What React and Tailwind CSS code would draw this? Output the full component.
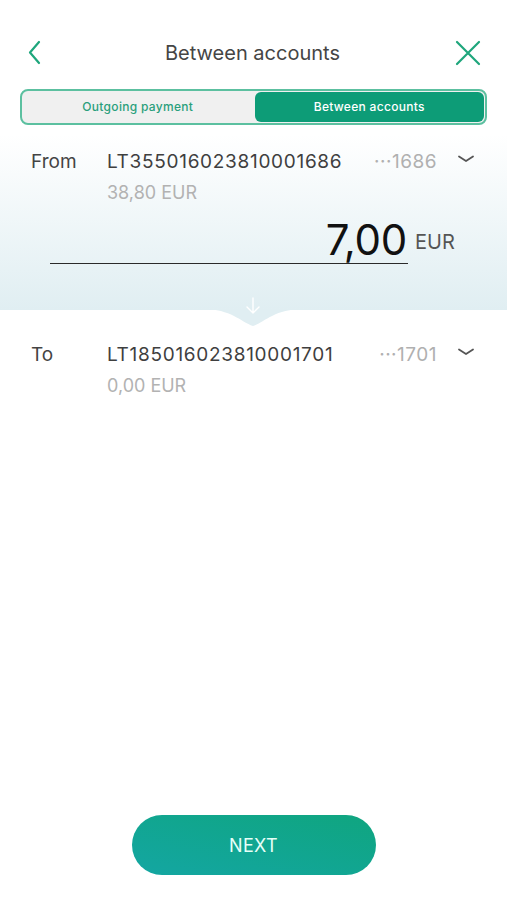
import React from "react";

const font = { fontFamily: "Inter, 'Open Sans', sans-serif" };

function Chevron() {
  return (
    <svg width="18" height="10" viewBox="0 0 18 10" fill="none">
      <path d="M2 2.5 L9 7 L16 2.5" stroke="#555" strokeWidth="1.8" strokeLinecap="round" strokeLinejoin="round" />
    </svg>
  );
}

function AccountRow({ label, iban, tail, balance }) {
  return (
    <div className="flex pl-[31px] pr-[32px]">
      <div className="w-[76px] text-[19px] leading-[24px] text-[#444]">{label}</div>
      <div className="flex-1 flex flex-col">
        <div className="flex items-center">
          <div className="flex-1 text-[19px] leading-[24px] text-[#3f3f3f] tracking-[0.7px]">{iban}</div>
          <div className="text-[19px] leading-[24px] text-[#b0b0b0] tracking-[0.5px]">···{tail}</div>
          <div className="ml-[20px] mb-[6px]"><Chevron /></div>
        </div>
        <div className="mt-[8px] text-[18px] leading-[22px] text-[#b2b2b2]">{balance}</div>
      </div>
    </div>
  );
}

export default function App() {
  return (
    <div className="w-[507px] h-[900px] bg-white flex flex-col overflow-hidden" style={font}>
      <div className="h-[106px] pt-[38px] px-[24px] flex items-start justify-between">
        <svg width="24" height="30" viewBox="0 0 24 30">
          <path d="M15 4 L6 14.5 L15 25" stroke="#1ea67c" strokeWidth="2.2" fill="none" strokeLinecap="round" strokeLinejoin="round" />
        </svg>
        <div className="text-[20px] leading-[30px] text-[#454545] ml-[4px]">Between accounts</div>
        <svg width="30" height="30" viewBox="0 0 30 30">
          <path d="M4 4 L26 26 M26 4 L4 26" stroke="#1ea67c" strokeWidth="2.2" fill="none" strokeLinecap="round" />
        </svg>
      </div>
      <div className="mx-[20px] -mt-[17px] h-[36px] rounded-[8px] border-2 border-[#5cc0a0] bg-[#f0f0f0] flex p-[1px]">
        <div className="flex-1 flex items-center justify-center text-[12px] text-[#2a9f7c] font-medium tracking-[0.3px]">Outgoing payment</div>
        <div className="flex-1 ml-[2px] flex items-center justify-center rounded-[6px] bg-[#0d9c77] text-[12px] text-white font-medium tracking-[0.3px]">Between accounts</div>
      </div>
      <div className="relative h-[185px] bg-gradient-to-b from-white from-[5%] to-[#e0eef2] pt-[25px]">
        <AccountRow label="From" iban="LT355016023810001686" tail="1686" balance="38,80 EUR" />
        <div className="flex items-end ml-[50px] mt-[13px]">
          <div className="w-[358px] border-b-[1.5px] border-[#2a2a2a] flex justify-end">
            <span className="text-[42px] leading-[46px] text-[#111] tracking-[-0.3px] mr-[1px]">7,00</span>
          </div>
          <span className="ml-[7px] mb-[10px] text-[20px] leading-[24px] text-[#555]">EUR</span>
        </div>
        <svg className="absolute left-[203px] top-[184px]" width="100" height="18" viewBox="0 0 100 18">
          <path d="M0 0 C 28 0, 38 13, 50 17 C 62 13, 72 0, 100 0 Z" fill="#e0eef2" />
        </svg>
        <svg className="absolute left-[244px] top-[171px]" width="18" height="20" viewBox="0 0 18 20">
          <path d="M9 2 L9 17 M3 11 L9 17 L15 11" stroke="#ffffff" strokeWidth="1.4" fill="none" strokeLinecap="round" strokeLinejoin="round" />
        </svg>
      </div>
      <div className="pt-[33px]">
        <AccountRow label="To" iban="LT185016023810001701" tail="1701" balance="0,00 EUR" />
      </div>
      <div className="flex-1" />
      <div className="flex justify-center pb-[25px]">
        <div className="w-[244px] h-[60px] rounded-full bg-gradient-to-tr from-[#14a6a2] to-[#10a57f] flex items-center justify-center text-[18px] text-[#e6fff8] tracking-[0.3px]">NEXT</div>
      </div>
    </div>
  );
}
